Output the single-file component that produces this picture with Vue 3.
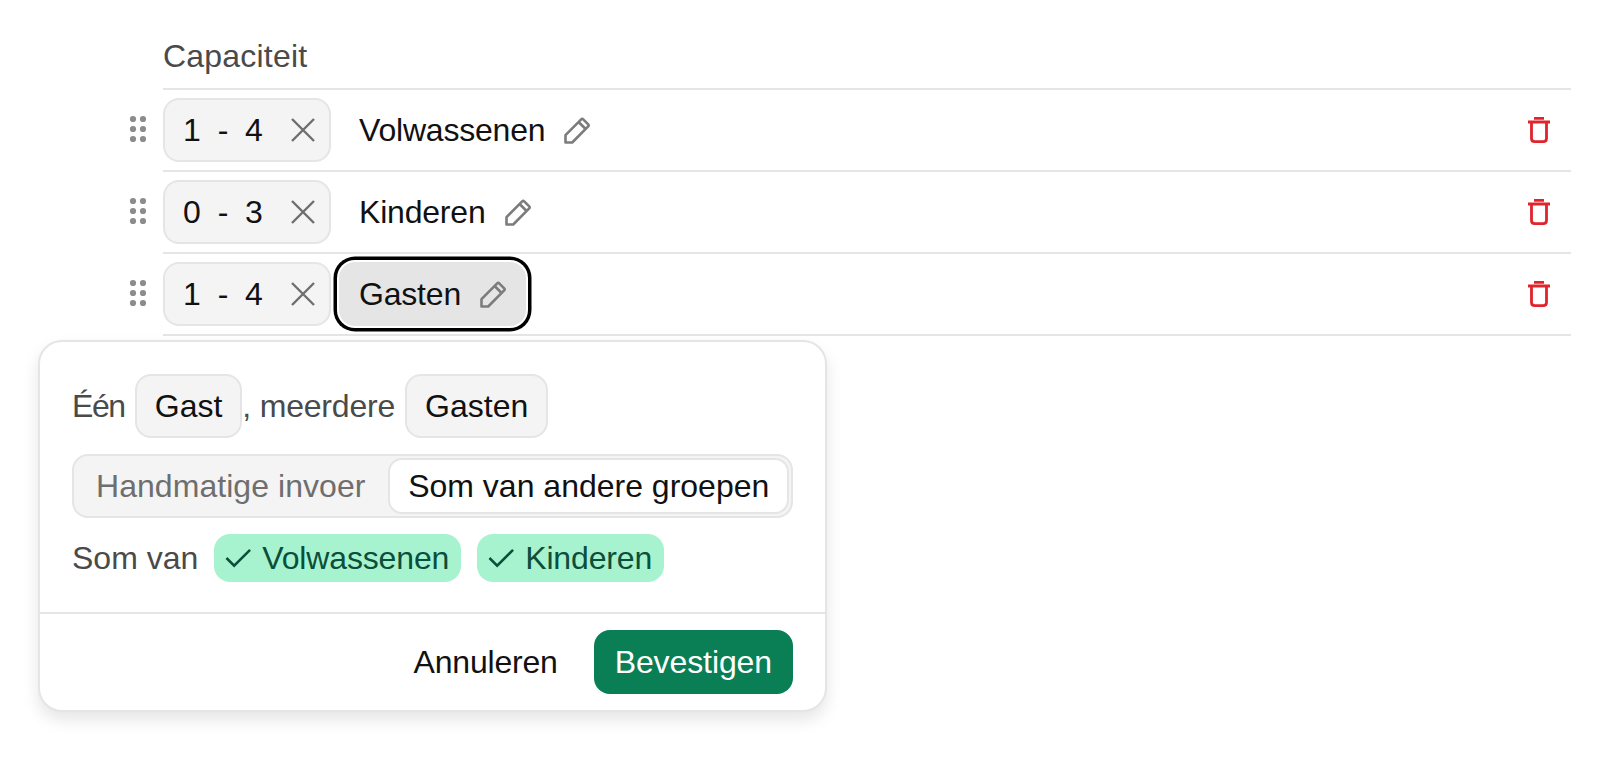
<script setup>
const rows = [
  { range: ['1', '4'], name: 'Volwassenen', active: false },
  { range: ['0', '3'], name: 'Kinderen', active: false },
  { range: ['1', '4'], name: 'Gasten', active: true },
]
const dots = [
  [6, 4], [16, 4], [6, 14], [16, 14], [6, 24], [16, 24],
]
</script>

<template>
  <div class="page">
    <div class="heading">Capaciteit</div>
    <div class="table">
      <div v-for="row in rows" :key="row.name" class="row">
        <svg class="grip" width="22" height="28" viewBox="0 0 22 28">
          <circle v-for="d in dots" :key="d.join()" :cx="d[0]" :cy="d[1]" r="3.1" fill="#8c8c8c" />
        </svg>
        <div class="range">
          <span class="num">{{ row.range[0] }}</span>
          <span class="dash">-</span>
          <span class="num">{{ row.range[1] }}</span>
          <svg class="x" width="24" height="24" viewBox="0 0 24 24">
            <path d="M1 1 L23 23 M23 1 L1 23" stroke="#6e6e6e" stroke-width="2.4" fill="none" />
          </svg>
        </div>
        <div class="name" :class="{ active: row.active }">
          <span class="name-text">{{ row.name }}</span>
          <svg class="pencil" width="26" height="27" viewBox="0 0 26 27">
            <path d="M1.5 25.5 V18.2 L17.2 2.4 Q18.2 1.4 19.2 2.4 L24.2 7.4 Q25.2 8.4 24.2 9.4 L8.2 25.5 Z M14.6 5 L21.6 12" stroke="#7c7c7c" stroke-width="2.6" fill="none" stroke-linejoin="round" />
          </svg>
        </div>
        <button class="trash" aria-label="Verwijderen">
          <svg width="22" height="26" viewBox="0 0 22 26">
            <path d="M6 1.3 H16 M0 5 H22 M3.5 5 V21.5 Q3.5 24.6 6.8 24.6 H15.2 Q18.5 24.6 18.5 21.5 V5" stroke="#e0242c" stroke-width="2.8" fill="none" />
          </svg>
        </button>
      </div>
    </div>

    <div class="popover">
      <div class="popover-body">
        <div class="line">
          <span class="een">Één</span>
          <span class="chip">Gast</span>
          <span class="comma">, meerdere</span>
          <span class="chip">Gasten</span>
        </div>
        <div class="segmented">
          <span class="seg">Handmatige invoer</span>
          <span class="seg selected">Som van andere groepen</span>
        </div>
        <div class="line sum">
          <span class="sum-label">Som van</span>
          <span class="tag">
            <svg width="27" height="20" viewBox="0 0 28 20"><path d="M1.5 10 L9.5 18 L26 1.5" stroke="#0b4f3a" stroke-width="2.6" fill="none" /></svg>
            <span class="tag-text">Volwassenen</span>
          </span>
          <span class="tag">
            <svg width="27" height="20" viewBox="0 0 28 20"><path d="M1.5 10 L9.5 18 L26 1.5" stroke="#0b4f3a" stroke-width="2.6" fill="none" /></svg>
            <span class="tag-text">Kinderen</span>
          </span>
        </div>
      </div>
      <div class="popover-foot">
        <button class="cancel">Annuleren</button>
        <button class="confirm">Bevestigen</button>
      </div>
    </div>
  </div>
</template>

<style>
html, body { margin: 0; background: #fff; }
</style>

<style scoped>
.page {
  width: 1612px;
  height: 760px;
  box-sizing: border-box;
  padding: 32px 41px 0 38px;
  font-family: "Liberation Sans", Arial, sans-serif;
  font-size: 32px;
  color: #111;
  overflow: hidden;
}
.heading {
  margin-left: 125px;
  height: 56px;
  line-height: 48px;
  letter-spacing: 0.2px;
  color: #4a4a4a;
}
.table { margin-left: 125px; }
.row {
  display: flex;
  align-items: center;
  height: 82px;
  box-sizing: border-box;
  border-top: 2px solid #e5e5e5;
}
.row:last-child {
  height: 84px;
  border-bottom: 2px solid #e5e5e5;
}
.grip {
  flex: none;
  margin: 0 14px 3px -36px;
}
.range {
  display: flex;
  align-items: center;
  flex: none;
  width: 168px;
  height: 64px;
  box-sizing: border-box;
  padding-left: 18px;
  background: #f4f4f4;
  border: 2px solid #e5e5e5;
  border-radius: 16px;
}
.num { width: 18px; text-align: center; }
.dash { width: 44px; text-align: center; }
.x { margin-left: 28px; }
.name {
  display: flex;
  align-items: center;
  gap: 19px;
  height: 64px;
  margin-left: 8px;
  padding: 0 20px;
  border-radius: 16px;
}
.name-text { letter-spacing: -0.2px; }
.name.active {
  background: #e5e5e5;
  box-shadow: 0 0 0 2px #fff, 0 0 0 5.5px #000;
}
.trash {
  margin-left: auto;
  margin-right: 21px;
  padding: 0;
  border: 0;
  background: none;
  display: flex;
}
.popover {
  width: 789px;
  margin-top: 4px;
  box-sizing: border-box;
  background: #fff;
  border: 2px solid #e5e5e5;
  border-radius: 24px;
  box-shadow: 0 8px 16px rgba(0, 0, 0, 0.1);
}
.popover-body {
  display: flex;
  flex-direction: column;
  gap: 16px;
  padding: 32px 32px 30px;
  color: #4a4a4a;
}
.line { display: flex; align-items: center; }
.een { margin-right: 10px; letter-spacing: -1.4px; }
.comma { margin-right: 10px; letter-spacing: -0.2px; }
.chip {
  display: flex;
  align-items: center;
  height: 64px;
  box-sizing: border-box;
  padding: 0 18px;
  color: #111;
  background: #f4f4f4;
  border: 2px solid #e5e5e5;
  border-radius: 16px;
}
.segmented {
  display: flex;
  align-items: stretch;
  gap: 2px;
  height: 64px;
  box-sizing: border-box;
  padding: 2px;
  background: #f4f4f4;
  border: 2px solid #e5e5e5;
  border-radius: 16px;
}
.seg {
  display: flex;
  align-items: center;
  padding: 0 21px 0 20px;
  letter-spacing: 0.05px;
  color: #6e6e6e;
}
.seg.selected {
  flex: 1;
  justify-content: center;
  padding: 0;
  letter-spacing: 0;
  color: #111;
  background: #fff;
  border: 2px solid #e5e5e5;
  border-radius: 14px;
}
.sum-label { margin-right: 16px; }
.tag {
  display: flex;
  align-items: center;
  gap: 10px;
  height: 48px;
  padding: 0 12px 0 11px;
  margin-right: 16px;
  color: #0b4f3a;
  background: #a7f3d0;
  border-radius: 16px;
}
.tag-text { letter-spacing: -0.15px; }
.popover-foot {
  display: flex;
  justify-content: flex-end;
  align-items: center;
  gap: 16px;
  padding: 16px 32px;
  border-top: 2px solid #e5e5e5;
}
button { font: inherit; cursor: pointer; }
.cancel {
  height: 64px;
  padding: 0 20px;
  border: 0;
  background: none;
  color: #111;
  letter-spacing: -0.2px;
}
.confirm {
  height: 64px;
  padding: 0 21px;
  border: 0;
  color: #fff;
  background: #0a7f56;
  border-radius: 16px;
  letter-spacing: -0.1px;
}
</style>
